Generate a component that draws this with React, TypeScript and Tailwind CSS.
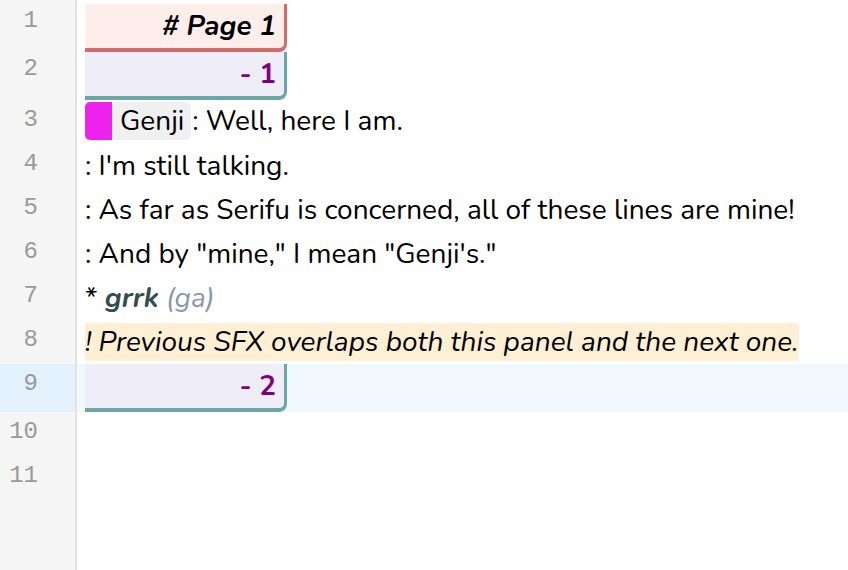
import React from 'react'

const textFont = { fontFamily: '"Nunito", Lato, "Noto Sans", sans-serif' }

function Heading({ children, tone }: { children: React.ReactNode; tone: 'page' | 'panel' }) {
  const cls =
    tone === 'page'
      ? 'bg-[#fdeeeb] border-[#d46a6a] text-black italic'
      : 'bg-[#efeef8] border-[#6aa8a8] text-[#800080]'
  return (
    <div
      className={`w-[202px] h-[48px] flex items-center justify-end pr-[8px] border-b-4 border-r-[3px] rounded-br-[8px] font-bold text-[28px] ${cls}`}
    >
      {children}
    </div>
  )
}

export default function App() {
  const lines = Array.from({ length: 11 }, (_, i) => i + 1)
  const tall = [1, 2, 9]

  return (
    <div className="flex h-[570px] w-[848px] bg-white overflow-hidden" style={textFont}>
      {/* Gutter */}
      <div
        className="w-[77px] shrink-0 bg-[#f5f5f5] border-r-2 border-[#e2e2e2] pt-[4px] text-[#9a9a9a] text-[24px]"
        style={{ fontFamily: '"Liberation Mono", monospace' }}
      >
        {lines.map((n) => (
          <div
            key={n}
            className={`text-right pr-[37px] ${n <= 2 ? 'leading-[34px]' : 'leading-[40px]'} ${
              tall.includes(n) ? 'h-[48px]' : 'h-[44px]'
            } ${n === 9 ? 'bg-[#e3f1fc]' : ''}`}
          >
            {n}
          </div>
        ))}
      </div>

      {/* Editor content */}
      <div className="flex-1 pt-[4px] text-[28px] text-black">
        <div className="pl-2">
          <Heading tone="page"># Page 1</Heading>
        </div>
        <div className="pl-2">
          <Heading tone="panel">- 1</Heading>
        </div>

        <div className="pl-2 h-[44px] flex items-center">
          <span className="inline-flex items-stretch h-[38px] mr-[1px] -mt-[3px]">
            <span className="w-[27px] bg-[#ee22ee] rounded-l-[5px]" />
            <span className="bg-[#f0f0f0] rounded-r-[5px] pl-[8px] pr-[7px] flex items-center">Genji</span>
          </span>
          <span className="-mt-[3px]">: Well, here I am.</span>
        </div>

        <div className="pl-2 h-[44px] flex items-center">: I'm still talking.</div>
        <div className="pl-2 h-[44px] flex items-center">: As far as Serifu is concerned, all of these lines are mine!</div>
        <div className="pl-2 h-[44px] flex items-center">: And by "mine," I mean "Genji's."</div>

        <div className="pl-2 h-[44px] flex items-center whitespace-pre">
          <span>* </span>
          <span className="font-bold italic text-[#2f4f4f]">grrk</span>
          <span className="italic text-[#8899a6]"> (ga)</span>
        </div>

        <div className="pl-2 h-[44px] flex items-center">
          <span className="italic bg-[#ffefd5] leading-[38px]">! Previous SFX overlaps both this panel and the next one.</span>
        </div>

        <div className="pl-2 bg-[#f0f8fe]">
          <Heading tone="panel">- 2</Heading>
        </div>

        <div className="h-[44px]" />
        <div className="h-[44px]" />
      </div>
    </div>
  )
}
